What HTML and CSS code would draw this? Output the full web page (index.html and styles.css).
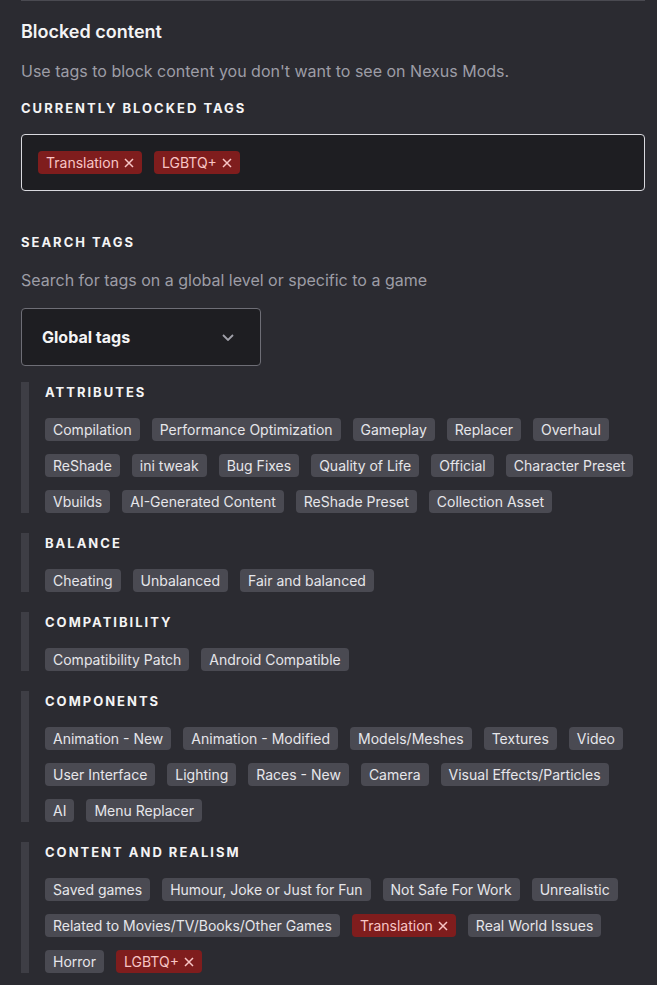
FILE: index.html
```html
<!DOCTYPE html>
<html lang="en">
<head>
<meta charset="utf-8">
<title>Blocked content</title>
<link rel="stylesheet" href="styles.css">
</head>
<body>
<main class="page">
  <h1 class="title">Blocked content</h1>
  <p class="desc desc-top">Use tags to block content you don't want to see on Nexus Mods.</p>
  <h2 class="label label-blocked">Currently blocked tags</h2>
  <div class="blocked-box">
    <span class="tag tag-red">Translation <svg class="x" viewBox="0 0 10 10"><path d="M1 1L9 9M9 1L1 9"/></svg></span>
    <span class="tag tag-red">LGBTQ+ <svg class="x" viewBox="0 0 10 10"><path d="M1 1L9 9M9 1L1 9"/></svg></span>
  </div>
  <h2 class="label label-search">Search tags</h2>
  <p class="desc desc-search">Search for tags on a global level or specific to a game</p>
  <div class="dropdown">
    <span class="dropdown-text">Global tags</span>
    <svg class="chev" viewBox="0 0 12 7"><path d="M1 1L6 6L11 1"/></svg>
  </div>

  <section class="group">
    <h3 class="group-title">Attributes</h3>
    <div class="tags">
      <span class="tag">Compilation</span>
      <span class="tag">Performance Optimization</span>
      <span class="tag">Gameplay</span>
      <span class="tag">Replacer</span>
      <span class="tag">Overhaul</span>
      <span class="tag">ReShade</span>
      <span class="tag">ini tweak</span>
      <span class="tag">Bug Fixes</span>
      <span class="tag">Quality of Life</span>
      <span class="tag">Official</span>
      <span class="tag">Character Preset</span>
      <span class="tag">Vbuilds</span>
      <span class="tag">AI-Generated Content</span>
      <span class="tag">ReShade Preset</span>
      <span class="tag">Collection Asset</span>
    </div>
  </section>

  <section class="group">
    <h3 class="group-title">Balance</h3>
    <div class="tags">
      <span class="tag">Cheating</span>
      <span class="tag">Unbalanced</span>
      <span class="tag">Fair and balanced</span>
    </div>
  </section>

  <section class="group">
    <h3 class="group-title">Compatibility</h3>
    <div class="tags">
      <span class="tag">Compatibility Patch</span>
      <span class="tag">Android Compatible</span>
    </div>
  </section>

  <section class="group">
    <h3 class="group-title">Components</h3>
    <div class="tags">
      <span class="tag">Animation - New</span>
      <span class="tag">Animation - Modified</span>
      <span class="tag">Models/Meshes</span>
      <span class="tag">Textures</span>
      <span class="tag">Video</span>
      <span class="tag">User Interface</span>
      <span class="tag">Lighting</span>
      <span class="tag">Races - New</span>
      <span class="tag">Camera</span>
      <span class="tag">Visual Effects/Particles</span>
      <span class="tag">AI</span>
      <span class="tag">Menu Replacer</span>
    </div>
  </section>

  <section class="group">
    <h3 class="group-title">Content and Realism</h3>
    <div class="tags">
      <span class="tag">Saved games</span>
      <span class="tag">Humour, Joke or Just for Fun</span>
      <span class="tag">Not Safe For Work</span>
      <span class="tag">Unrealistic</span>
      <span class="tag">Related to Movies/TV/Books/Other Games</span>
      <span class="tag tag-red">Translation <svg class="x" viewBox="0 0 10 10"><path d="M1 1L9 9M9 1L1 9"/></svg></span>
      <span class="tag">Real World Issues</span>
      <span class="tag">Horror</span>
      <span class="tag tag-red">LGBTQ+ <svg class="x" viewBox="0 0 10 10"><path d="M1 1L9 9M9 1L1 9"/></svg></span>
    </div>
  </section>
</main>
</body>
</html>
```

FILE: styles.css
```css
html, body {
  margin: 0;
  padding: 0;
  background: #2b2b31;
}
body {
  font-family: Inter, "Noto Sans", sans-serif;
  color: #f4f4f5;
  -webkit-font-smoothing: antialiased;
}
.page {
  margin-left: 21px;
  width: 624px;
  border-top: 1px solid #4a4a51;
  padding-bottom: 40px;
}
.title {
  margin: 17px 0 0;
  font-size: 18px;
  line-height: 28px;
  font-weight: 600;
  color: #f4f4f5;
}
.desc {
  margin: 0;
  font-size: 16px;
  line-height: 24px;
  color: #9d9da6;
}
.desc-top { margin-top: 13px; }
.desc-search { margin-top: 16px; }
.label {
  margin: 0;
  font-size: 13px;
  line-height: 20px;
  font-weight: 700;
  letter-spacing: 2px;
  text-transform: uppercase;
  color: #f4f4f5;
}
.label-blocked { margin-top: 15px; }
.label-search { margin-top: 41px; }
.blocked-box {
  margin-top: 16px;
  box-sizing: border-box;
  height: 57px;
  padding: 0 16px;
  border: 1px solid #d9d9de;
  border-radius: 4px;
  background: #1e1e22;
  display: flex;
  align-items: center;
  gap: 12px;
}
.tag {
  display: inline-flex;
  align-items: center;
  gap: 5px;
  box-sizing: border-box;
  height: 23px;
  padding: 0 8px;
  border-radius: 4px;
  background: #4a4a52;
  color: #e6e6ea;
  font-size: 14px;
  line-height: 20px;
  white-space: nowrap;
}
.tag-red {
  background: #7f1d1d;
  color: #f8c5c5;
}
.x {
  width: 10px;
  height: 10px;
  fill: none;
  stroke: currentColor;
  stroke-width: 1.5;
}
.dropdown {
  margin-top: 16px;
  box-sizing: border-box;
  width: 240px;
  height: 58px;
  padding: 0 26px 0 20px;
  border: 1px solid #6e6e76;
  border-radius: 4px;
  background: #1e1e22;
  display: flex;
  align-items: center;
  justify-content: space-between;
}
.dropdown-text {
  font-size: 16px;
  font-weight: 700;
  color: #f4f4f5;
}
.chev {
  width: 12px;
  height: 7px;
  fill: none;
  stroke: #a1a1aa;
  stroke-width: 1.8;
}
.group {
  margin-top: 20px;
  border-left: 8px solid #3e3e45;
  padding-left: 16px;
}
.dropdown + .group { margin-top: 16px; }
.group-title {
  margin: 0;
  font-size: 13px;
  line-height: 20px;
  font-weight: 700;
  letter-spacing: 2px;
  text-transform: uppercase;
  color: #f4f4f5;
}
.tags {
  margin-top: 16px;
  display: flex;
  flex-wrap: wrap;
  gap: 13px 12px;
}
```
